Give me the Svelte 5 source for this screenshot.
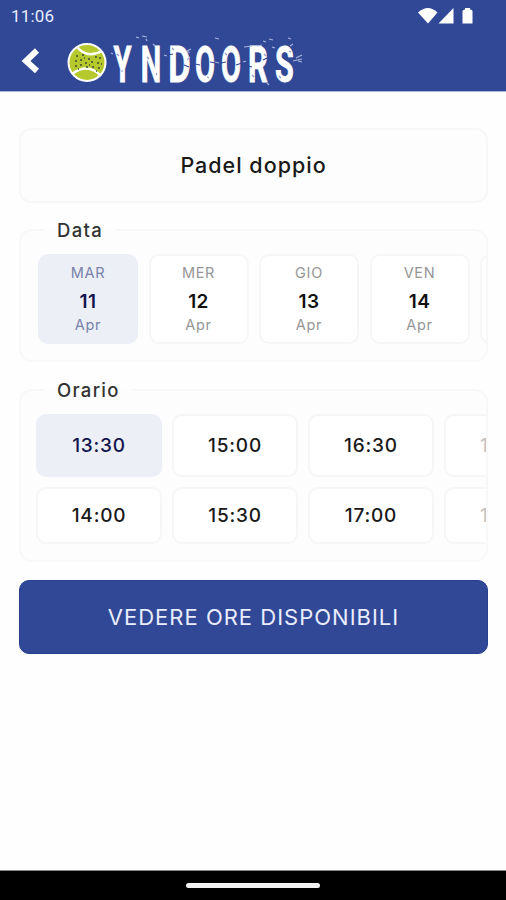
<script>
	let sport = "Padel doppio"
	let selectedDay = 11;
	let selectedTime = "13:30";

	let days = [
		{ name: "MAR", day: 11, month: "Apr" },
		{ name: "MER", day: 12, month: "Apr" },
		{ name: "GIO", day: 13, month: "Apr" },
		{ name: "VEN", day: 14, month: "Apr" },
		{ name: "", day: "", month: "" },
	]

	let times = [
		[ "13:30", "15:00", "16:30", "18:00" ],
		[ "14:00", "15:30", "17:00", "18:30" ],
	]

	let letters = [
		[ "Y", 122.5, 0.58 ],
		[ "N", 151, 0.58 ],
		[ "D", 179.5, 0.69 ],
		[ "O", 205, 0.58 ],
		[ "O", 231, 0.58 ],
		[ "R", 258, 0.62 ],
		[ "S", 284.5, 0.61 ],
	]
</script>

<style>
	:global(body) {
		margin: 0;
		background: #fefefe;
	}
	.screen {
		display: flex;
		flex-direction: column;
		height: 900px;
		overflow: hidden;
		font-family: Inter, sans-serif;
		color: #191919;
	}
	button {
		font-family: inherit;
		color: inherit;
		margin: 0;
		padding: 0;
		box-sizing: border-box;
	}
	header {
		height: 92px;
		box-sizing: border-box;
		background: #304896;
		border-bottom: 1px solid #a9b2d3;
		flex: none;
	}
	.status {
		display: flex;
		justify-content: space-between;
		align-items: center;
		height: 32px;
		padding: 0 32px 0 11px;
		box-sizing: border-box;
		color: #e8edff;
		font-family: Roboto, sans-serif;
		font-size: 17px;
		letter-spacing: 0.2px;
	}
	.status svg, .brand svg {
		display: block;
		overflow: visible;
	}
	.brand {
		display: flex;
		height: 59px;
	}
	.back {
		border: none;
		background: none;
		width: 62px;
	}
	main {
		flex: 1;
		padding: 36px 18px 0 19px;
	}
	.sport {
		display: block;
		width: 100%;
		height: 75px;
		padding-bottom: 2px;
		border: 2px solid #f7f7f8;
		border-radius: 12px;
		background: #fdfdfd;
		font-size: 21.5px;
		font-weight: 500;
		letter-spacing: 1px;
	}
	fieldset {
		min-width: 0;
		box-sizing: border-box;
		margin: 0;
		padding: 0;
		border: 2px solid #f8f8f9;
		border-radius: 13px;
		background: #fdfdfd;
	}
	legend {
		margin-left: 23px;
		padding: 0 13px;
		height: 22px;
		line-height: 22px;
		font-size: 18.5px;
		font-weight: 500;
		letter-spacing: 1.3px;
		color: #333;
	}
	.data {
		height: 143px;
		margin-top: 16px;
	}
	.orario {
		height: 183px;
		margin-top: 17px;
	}
	.days {
		display: flex;
		gap: 10.5px;
		overflow: hidden;
		padding: 13px 0 0 17px;
	}
	.day {
		display: flex;
		flex-direction: column;
		align-items: center;
		flex: none;
		width: 100px;
		height: 90px;
		padding-top: 8px;
		border: 2px solid #f6f6f8;
		border-radius: 10px;
		background: #fff;
		font-size: 14.5px;
		line-height: 18px;
		color: #969696;
	}
	.day span {
		letter-spacing: 0.7px;
	}
	.day b {
		margin: 10px 0 4px;
		font-size: 19px;
		line-height: 20px;
		font-weight: 600;
		letter-spacing: 0.4px;
		color: #111;
	}
	.day.selected, .time.selected {
		background: #eceff6;
		border-color: #eceff6;
		color: #7782aa;
	}
	.day.selected b, .time.selected {
		color: #13144d;
	}
	.times {
		display: flex;
		flex-direction: column;
		gap: 10px;
		overflow: hidden;
		padding: 13px 0 0 15px;
	}
	.row {
		display: flex;
		gap: 10px;
		height: 57px;
	}
	.row:first-child {
		height: 63px;
	}
	.time {
		flex: none;
		width: 126px;
		border: 2px solid #f6f6f8;
		border-radius: 10px;
		background: #fff;
		font-size: 19px;
		font-weight: 500;
		letter-spacing: 0.8px;
	}
	.time.faded {
		color: #c4c4c4;
	}
	.submit {
		display: block;
		width: 100%;
		height: 74px;
		margin-top: 18px;
		border: 1px solid #263f91;
		border-radius: 10px;
		background: #304896;
		color: #e9edff;
		font-size: 22px;
		font-weight: 400;
		letter-spacing: 1px;
	}
	footer {
		display: flex;
		justify-content: center;
		align-items: center;
		flex: none;
		height: 30px;
		background: #000;
		border-top: 1px solid #888;
		box-sizing: border-box;
	}
	.pill {
		width: 134px;
		height: 5px;
		border-radius: 3px;
		background: #f2f2f2;
	}
	.logo text {
		font-family: Roboto, sans-serif;
		font-weight: 700;
		font-size: 50px;
		fill: #fff;
		stroke: #fff;
		stroke-width: 0.8px;
	}
</style>

<div class="screen">
	<header>
		<div class="status">
			<span>11:06</span>
			<svg width="56" height="18" viewBox="418 6 56 18" fill="#fff">
				<path d="M418 11.500Q428 2.500 437.500 11.500L428 22.500Z" />
				<path d="M438.500 22.500L453.500 7V22.500Z" />
				<path d="M462.500 10Q463 8.500 465 8.500V7H470V8.500Q472.500 8.500 472.500 10V22.500H462.500Z" />
			</svg>
		</div>
		<div class="brand">
			<button class="back" aria-label="Indietro">
				<svg width="62" height="59" viewBox="0 32 62 59">
					<path d="M37 50.500L26 61L37 71" fill="none" stroke="#fff" stroke-width="6" />
				</svg>
			</button>
			<svg class="logo" width="250" height="59" viewBox="62 32 250 59">
				<circle cx="87" cy="62.500" r="18.500" fill="#b5c92c" stroke="#fff" stroke-width="2" />
				<path d="M77 47Q87 59 102 51M72 74Q88 62 101 76" fill="none" stroke="#fff" stroke-width="2.300" />
				<path d="M76 56h2M82 55h2M88 59h2M95 57h2M99 58h2M75 61h2M80 60h2M85 63h2M91 62h2M97 63h2M75 66h2M80 65h2M86 67h2M92 67h2M98 68h2M78 69h1M84 58h1M89 65h1M96 71h1M101 64h1" stroke="#3d4b33" stroke-width="1.700" />
				{#each letters as [ letter, x, scale ]}
					<text transform="translate({x} 81.500) scale({scale} 1)" text-anchor="middle">{letter}</text>
				{/each}
				<!-- stencil gaps and worn spots -->
				<path d="M195 64l5 1M210 62l6 1M221 63l5-1M236 65l6-2M168 55l5-1M184 65l5 2M263 60l4-2M248 66l4 1M275 68l4-1" fill="none" stroke="#304896" stroke-width="1.200" />
				<path d="M121 71h2M117 54l2 2M147 57l2 2M156 73l1 2M172 48l2 2M187 51l3 2M207 77l2 1M225 53l2 2M252 75l2 2M264 54l2 2M279 76l2 2M289 51l2 1" stroke="#8f9cca" stroke-width="1.200" />
				<path d="M136 37l3 1M142 36l5 1M146 39l1 2M153 44l2 2M113 54l-2-1M164 55l3 1M187 51l4-2M190 57l-3 3M215 62l4 1M243 62l3-1M244 47l8-1M257 46l5-1M263 41l3 1M215 38l4 1M269 39l4 1M288 38l3 1M290 46l3-2M293 61l9-2M296 58l6-3M298 61l4 1M267 83l2 2M275 48l-3-1" fill="none" stroke="#a9b5dc" stroke-width="1.200" />
			</svg>
		</div>
	</header>

	<main>
		<button class="sport">{sport}</button>

		<fieldset class="data">
			<legend>Data</legend>
			<div class="days">
				{#each days as item}
					<button class="day" class:selected={item.day === selectedDay} on:click={() => selectedDay = item.day}>
						<span>{item.name}</span>
						<b>{item.day}</b>
						<span>{item.month}</span>
					</button>
				{/each}
			</div>
		</fieldset>

		<fieldset class="orario">
			<legend>Orario</legend>
			<div class="times">
				{#each times as row}
					<div class="row">
						{#each row as time, i}
							<button class="time" class:faded={i === 3} class:selected={time === selectedTime} on:click={() => selectedTime = time}>{time}</button>
						{/each}
					</div>
				{/each}
			</div>
		</fieldset>

		<button class="submit">VEDERE ORE DISPONIBILI</button>
	</main>

	<footer>
		<div class="pill"></div>
	</footer>
</div>
